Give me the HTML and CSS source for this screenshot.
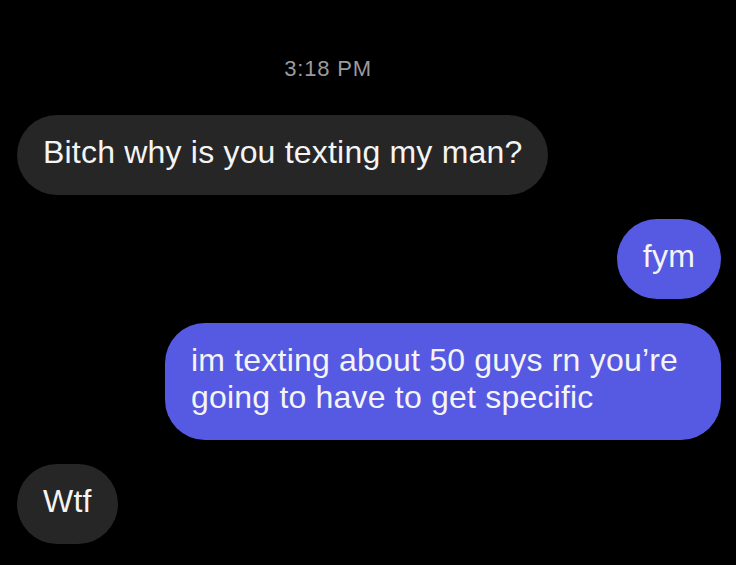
FILE: index.html
```html
<!DOCTYPE html>
<html lang="en">
<head>
  <meta charset="UTF-8">
  <meta name="viewport" content="width=device-width, initial-scale=1.0">
  <title>Messages</title>
  <link rel="stylesheet" href="styles.css">
</head>
<body>

  <div class="thread">
    <div class="time">3:18 PM</div>

    <div class="msg them">Bitch why is you texting my man?</div>
    <div class="msg me">fym</div>
    <div class="msg me">im texting about 50 guys rn you’re going to have to get specific</div>
    <div class="msg them">Wtf</div>
  </div>

</body>
</html>
```

FILE: styles.css
```css
body {
  margin: 0;
  background-color: #000;
  font-family: "Liberation Sans", Arial, sans-serif;
  height: 100vh;
  overflow: hidden;
}

.thread {
  display: flex;
  flex-direction: column;
  gap: 24px;
  padding: 56px 15px 0 17px;
}

.time {
  color: #9b9b9b;
  font-size: 22px;
  line-height: 26px;
  letter-spacing: 0.8px;
  text-align: center;
  padding-right: 82px;
  margin-bottom: 9px;
}

.msg {
  box-sizing: border-box;
  max-width: 556px;
  padding: 19px 26px 24px 26px;
  border-radius: 40px;
  font-size: 32px;
  line-height: 37px;
  letter-spacing: 0.2px;
  color: #f4f4f4;
}

.them {
  align-self: flex-start;
  background-color: #262626;
}

.me {
  align-self: flex-end;
  background-color: #5659e2;
}
```
